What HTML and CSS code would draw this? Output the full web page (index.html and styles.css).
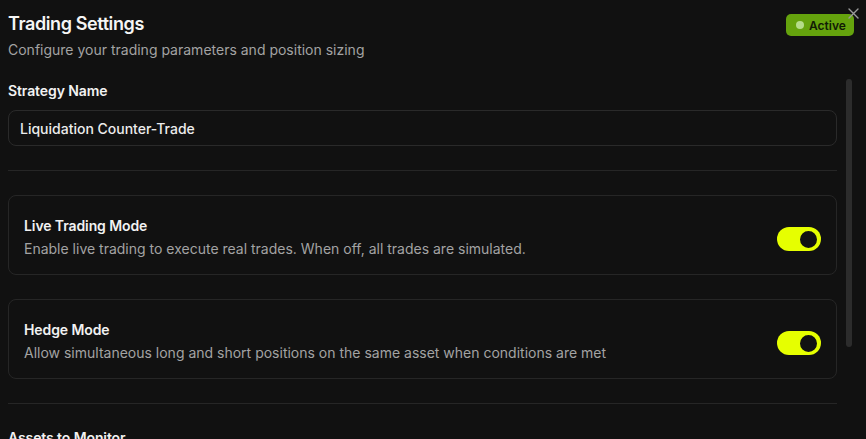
FILE: index.html
```html
<!DOCTYPE html>
<html>
<head>
<meta charset="utf-8">
<link rel="stylesheet" href="styles.css">
</head>
<body>
<div class="dialog">
  <button class="close" aria-label="Close">
    <svg width="11" height="11" viewBox="0 0 11 11"><path d="M1 1L10 10M10 1L1 10" stroke="#9a9a9a" stroke-width="1.4" stroke-linecap="round"/></svg>
  </button>
  <header class="header">
    <div class="heading">
      <h1 class="title">Trading Settings</h1>
      <p class="subtitle">Configure your trading parameters and position sizing</p>
    </div>
    <span class="badge"><span class="dot"></span>Active</span>
  </header>
  <div class="body">
    <div class="content">
      <label class="label">Strategy Name</label>
      <div class="input">Liquidation Counter-Trade</div>
      <hr class="divider">
      <div class="card">
        <div class="card-text">
          <div class="card-title">Live Trading Mode</div>
          <div class="card-desc">Enable live trading to execute real trades. When off, all trades are simulated.</div>
        </div>
        <span class="toggle"><span class="knob"></span></span>
      </div>
      <div class="card">
        <div class="card-text">
          <div class="card-title">Hedge Mode</div>
          <div class="card-desc">Allow simultaneous long and short positions on the same asset when conditions are met</div>
        </div>
        <span class="toggle"><span class="knob"></span></span>
      </div>
      <hr class="divider">
      <div class="label label-next">Assets to Monitor</div>
    </div>
    <div class="scroll-thumb"></div>
  </div>
</div>
</body>
</html>
```
FILE: styles.css
```css
* { box-sizing: border-box; }
html, body {
  margin: 0;
  padding: 0;
  background: #111111;
  height: 100%;
  overflow: hidden;
}
body {
  font-family: Inter, "Noto Sans", sans-serif;
  color: #f2f2f2;
}
.dialog {
  position: relative;
  height: 439px;
}
.close {
  position: absolute;
  top: 7px;
  left: 847px;
  width: 13px;
  height: 13px;
  padding: 1px;
  border: 0;
  background: transparent;
  display: flex;
  z-index: 2;
}
.header {
  display: flex;
  justify-content: space-between;
  align-items: flex-start;
  padding: 10px 12px 0 8px;
}
.title {
  margin: 0;
  font-size: 18px;
  line-height: 28px;
  font-weight: 600;
  letter-spacing: -0.4px;
  color: #f5f5f5;
}
.subtitle {
  margin: 2px 0 0;
  font-size: 14px;
  line-height: 20px;
  color: #a3a3a3;
}
.badge {
  margin-top: 4px;
  height: 22px;
  width: 68px;
  display: flex;
  align-items: center;
  gap: 5px;
  padding-left: 10px;
  background: #65a30d;
  border-radius: 5px;
  font-size: 12px;
  font-weight: 600;
  color: #111a05;
}
.dot {
  width: 8px;
  height: 8px;
  border-radius: 50%;
  background: #b5dc8a;
}
.body {
  position: relative;
}
.content {
  padding: 21px 29px 0 8px;
}
.label {
  display: block;
  font-size: 14px;
  line-height: 20px;
  font-weight: 600;
  letter-spacing: -0.1px;
  color: #f2f2f2;
}
.input {
  margin-top: 9px;
  height: 36px;
  border: 1px solid #2a2a2a;
  border-radius: 8px;
  padding: 0 11px;
  display: flex;
  align-items: center;
  font-size: 14px;
  font-weight: 500;
  color: #ececec;
}
.divider {
  border: 0;
  border-top: 1px solid #262626;
  margin: 24px 0;
}
.card {
  height: 80px;
  border: 1px solid #262626;
  border-radius: 8px;
  padding: 0 15px;
  display: flex;
  align-items: center;
  justify-content: space-between;
  margin-bottom: 24px;
}
.card + .divider { margin-top: 0; }
.card-text {
  padding-top: 4px;
}
.card-title {
  font-size: 14px;
  line-height: 20px;
  font-weight: 600;
  letter-spacing: -0.1px;
  color: #f2f2f2;
}
.card-desc {
  margin-top: 3px;
  font-size: 14px;
  line-height: 20px;
  color: #a3a3a3;
}
.toggle {
  width: 44px;
  height: 24px;
  border-radius: 12px;
  background: #e6ff00;
  display: flex;
  align-items: center;
  justify-content: flex-end;
  padding-right: 2px;
  margin-top: 8px;
}
.knob {
  width: 21px;
  height: 21px;
  border-radius: 50%;
  background: #121212;
  border: 2px solid #e6ff00;
}
.label-next {
  margin-top: 1px;
}
.scroll-thumb {
  position: absolute;
  left: 846px;
  top: 19px;
  width: 6px;
  height: 268px;
  border-radius: 3px;
  background: #2c2c2c;
}
```
